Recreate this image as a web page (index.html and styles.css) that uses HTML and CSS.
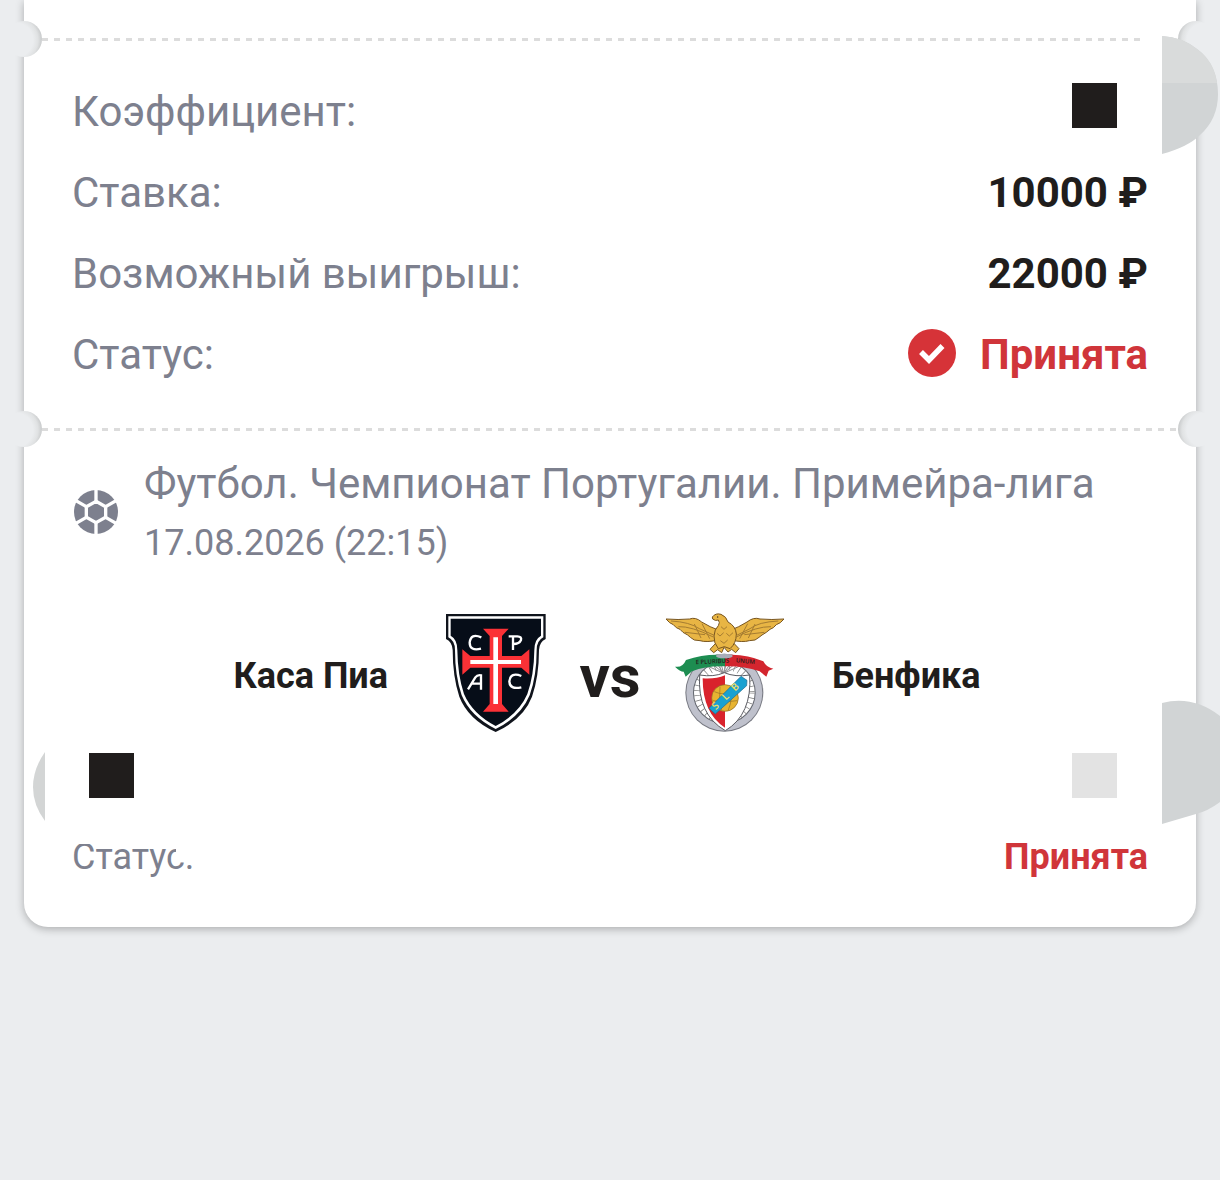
FILE: index.html
```html
<!DOCTYPE html>
<html lang="ru">
<head>
<meta charset="utf-8">
<meta name="viewport" content="width=device-width, initial-scale=1">
<title>Купон</title>
<link rel="stylesheet" href="styles.css">
</head>
<body>
<main class="ticket">
  <div class="stub"></div>

  <div class="perforation">
    <span class="notch notch-left"></span>
    <span class="dashes dashes-short"></span>
    <span class="notch notch-right"></span>
  </div>

  <dl class="details">
    <div class="row">
      <dt>Коэффициент:</dt>
      <dd class="raised"><span class="box"></span></dd>
    </div>
    <div class="row">
      <dt>Ставка:</dt>
      <dd>10000 ₽</dd>
    </div>
    <div class="row">
      <dt>Возможный выигрыш:</dt>
      <dd>22000 ₽</dd>
    </div>
    <div class="row">
      <dt>Статус:</dt>
      <dd class="accepted">
        <svg class="check" viewBox="0 0 48 48" aria-hidden="true">
          <circle cx="24" cy="24" r="24" fill="#d63338"/>
          <path d="M13 23L21 31L34.500 17" fill="none" stroke="#fff" stroke-width="5.500"/>
        </svg>
        Принята
      </dd>
    </div>
  </dl>

  <div class="perforation">
    <span class="notch notch-left"></span>
    <span class="dashes"></span>
    <span class="notch notch-right"></span>
  </div>

  <section class="event">
    <header class="event-head">
      <svg class="ball" viewBox="222 300 132 132" aria-hidden="true">
        <circle cx="288" cy="366" r="66" fill="#7d808e"/>
        <g fill="none" stroke="#fff" stroke-width="10">
          <path d="M288 334L317 350V382L288 398L259 382V350Z"/>
          <path d="M288 334V296M317 350L352 330M317 382L352 402M288 398V436M259 382L224 402M259 350L224 330"/>
        </g>
      </svg>
      <div class="event-text">
        <h1 class="league">Футбол. Чемпионат Португалии. Примейра-лига</h1>
        <time class="date" datetime="2026-08-17T22:15">17.08.2026 (22:15)</time>
      </div>
    </header>

    <div class="teams">
      <span class="team team-home">Каса Пиа</span>
      <svg class="crest" viewBox="18 39 360 360" role="img" aria-label="Каса Пиа">
        <path d="M48 42H347V117Q328 126 327 150Q327 230 306 290Q280 358 197 396Q114 358 88 290Q68 230 68 150Q67 126 48 117Z" fill="#10141c"/>
        <path d="M55 49H340V112Q320 122 320 150Q320 228 299 286Q272 350 197 387Q122 350 95 286Q75 228 75 150Q75 122 55 112Z" fill="#fff"/>
        <path d="M62 56H333V107Q313 118 313 150Q312 226 292 282Q266 342 197 378Q128 342 102 282Q83 226 82 150Q82 118 62 107Z" fill="#060d18"/>
        <path d="M159 86H236L216 108V168H274L298 148V224L274 203H216V312L236 335H159L179 312V203H121L97 224V148L121 168H179V108Z" fill="#fb3136"/>
        <path d="M190 112H204V180H273V192H204V312H190V192H121V180H190Z" fill="#fff"/>
        <g fill="none" stroke="#fff" stroke-width="7">
          <path d="M154 112Q122 98 119 128Q119 154 153 146"/>
          <path d="M249 150V112M236 109H262Q276 110 273 120Q268 132 250 132"/>
          <path d="M114 268L136 232Q142 224 153 226V269M126 251H153"/>
          <path d="M274 228Q242 215 238 244Q239 270 274 262"/>
        </g>
      </svg>
      <span class="versus">vs</span>
      <svg class="crest" viewBox="27 39 360 360" role="img" aria-label="Бенфика">
        <circle cx="208" cy="278" r="117" fill="#777982"/>
        <circle cx="208" cy="278" r="114" fill="#bfc1cc"/>
        <circle cx="208" cy="278" r="94" fill="#63666e"/>
        <circle cx="208" cy="278" r="91" fill="#fff"/>
        <circle cx="208" cy="278" r="80" fill="none" stroke="#777" stroke-width="22" stroke-dasharray="2 13"/>
        <path d="M206 220L140 190M206 220L158 180M206 220L178 180M206 220L195 180M206 220L217 180M206 220L234 180M206 220L254 180M206 220L272 190" stroke="#8d8d91" stroke-width="3"/>
        <path d="M134 225Q176 232 208 218Q240 232 284 225Q292 343 211 392Q126 343 134 225Z" fill="#fff" stroke="#5a5b62" stroke-width="3"/>
        <path d="M143 235Q181 238 210 226V383Q143 341 143 235Z" fill="#d9222c"/>
        <path d="M210 226Q240 238 276 235Q279 343 210 383Z" fill="#fff"/>
        <circle cx="210" cy="294" r="40" fill="#e7b431" stroke="#8a6726" stroke-width="2"/>
        <path d="M178 275Q210 290 242 272M174 302Q207 310 246 302M195 260Q190 294 200 330M225 260Q235 294 220 330" fill="none" stroke="#956f27" stroke-width="2"/>
        <path d="M258 229L276 241L275 257L181 342L162 325Z" fill="#19a1d1" stroke="#236a8b" stroke-width="2"/>
        <g class="crest-letters" fill="#f2df63" font-size="30">
          <text transform="translate(182 331) rotate(-44)">S</text>
          <text transform="translate(212 302) rotate(-44)">L</text>
          <text transform="translate(240 275) rotate(-44)">B</text>
        </g>
        <path d="M60 200Q83 204 93 180Q150 160 210 165V199Q154 197 111 214L92 230L86 215Q75 215 60 200Z" fill="#1d8d51"/>
        <path d="M210 165Q270 160 325 184Q335 204 355 206L341 212L334 230L314 214Q261 197 210 199Z" fill="#d3252e"/>
        <g class="crest-letters" fill="#241d1b" font-size="18">
          <text x="122" y="193" transform="rotate(-3 122 193)">E PLURIBUS</text>
          <text x="242" y="187" transform="rotate(5 242 187)">UNUM</text>
        </g>
        <ellipse cx="208" cy="168" rx="25" ry="7" fill="#a9adb8"/>
        <g fill="#e8b544" stroke="#78551f" stroke-width="3" stroke-linejoin="round">
          <path d="M190 90Q166 82 140 66Q122 50 104 57Q70 60 33 57L44 68L55 74L64 83L75 88L84 97L98 105L106 112L118 120L135 122Q155 128 190 120Z"/>
          <path d="M228 90Q250 82 276 66Q296 50 315 57Q350 60 387 57L376 68L364 74L355 83L345 88L334 97L321 105L312 112L300 120L283 122Q262 128 228 120Z"/>
          <path d="M184 128L165 148L176 158L188 149L200 158L207 142L219 156L230 148L242 158L252 146L230 123Z"/>
          <path d="M172 51Q182 38 198 43Q214 49 219 66Q242 78 244 102Q244 130 225 146L208 140L190 146Q176 130 177 108Q178 88 190 77Q196 67 190 60Q181 64 173 57Z"/>
        </g>
        <path d="M48 63Q104 66 133 86L180 107M70 80Q108 78 175 111M90 97L150 104M118 72L138 114M141 71L164 116M370 63Q310 66 285 86L243 107M348 80Q305 79 244 111M328 97L268 104M300 72L280 114M278 71L254 116M198 80L207 88L216 80M186 100L195 108L206 98M214 100L223 108L234 98M196 122L207 130L218 120" fill="none" stroke="#a57c31" stroke-width="3"/>
        <circle cx="188" cy="51" r="2" fill="#352819"/>
      </svg>
      <span class="team">Бенфика</span>
    </div>

    <div class="outcome">
      <span class="box"></span>
      <span class="box box-light"></span>
    </div>

    <div class="event-status">
      <span class="status-label">Статус:</span>
      <strong class="status-value">Принята</strong>
    </div>
  </section>

  <svg class="mark mark-top" viewBox="0 0 58 120" aria-hidden="true">
    <path d="M0 0Q20 1 35 13C50 24 56 40 56 58Q56 83 38 99Q26 111 0 118Z" fill="#d1d4d5"/>
    <path d="M0 0Q20 1 35 13Q52 25 55 47H0Z" fill="#d9dbdb"/>
  </svg>
  <svg class="mark mark-bottom" viewBox="0 0 58 124" aria-hidden="true">
    <path d="M0 3Q31 -5 58 16V102Q46 111 34 114L0 124Z" fill="#d1d4d5"/>
  </svg>
  <svg class="mark mark-left" viewBox="0 0 12 70" aria-hidden="true">
    <path d="M12 0V69Q0 53 0 35Q0 17 12 0Z" fill="#d3d5d5"/>
  </svg>
</main>
</body>
</html>
```
FILE: styles.css
```css
* {
  box-sizing: border-box;
}

body {
  margin: 0;
  background: #ebedef;
  color: #201d1c;
  font-family: Roboto, "Liberation Sans", sans-serif;
  font-size: 42px;
  line-height: 49px;
  overflow-x: hidden;
}

.ticket {
  position: relative;
  margin: 0 24px 48px;
  background: #fff;
  border-radius: 0 0 24px 24px;
  box-shadow: 0 2px 8px rgba(0, 0, 0, 0.28);
}

.stub {
  height: 21px;
}

.perforation {
  display: flex;
  align-items: center;
  margin: 0 -18px;
}

.notch {
  flex: none;
  width: 36px;
  height: 36px;
  border-radius: 50%;
}

.notch-left {
  background: radial-gradient(circle at 10px 19px, #ebedef 17px, #e0e2e3 22px, #c2c4c5 27px);
}

.notch-right {
  background: radial-gradient(circle at 26px 19px, #ebedef 17px, #e0e2e3 22px, #c2c4c5 27px);
}

.dashes {
  flex: 1;
  height: 3px;
  background: repeating-linear-gradient(90deg, #dcdcdc 0 6px, transparent 6px 12px);
}

.dashes-short {
  margin-right: 38px;
}

.details {
  display: flex;
  flex-direction: column;
  gap: 32px;
  margin: 0;
  padding: 30px 48px 32px;
}

.row {
  display: flex;
  justify-content: space-between;
}

.row dt {
  color: #7d808e;
}

.row dd {
  margin: 0;
  font-weight: 700;
}

.row .raised {
  display: flex;
  margin: -4px 31px 0 0;
}

.row .accepted {
  display: flex;
  gap: 24px;
  color: #d0353a;
}

.check {
  width: 48px;
  height: 48px;
  margin-top: -1px;
}

.box {
  width: 45px;
  height: 45px;
  background: #201d1c;
}

.box-light {
  background: #e3e3e3;
}

.event {
  padding: 12px 48px 49px;
}

.event-head {
  display: flex;
  align-items: center;
  gap: 26px;
  color: #7d808e;
}

.ball {
  flex: none;
  width: 44px;
  height: 44px;
  margin-left: 2px;
}

.event-text {
  display: flex;
  flex-direction: column;
  gap: 14px;
}

.league {
  margin: 0;
  font-size: 42px;
  font-weight: 400;
}

.date {
  font-size: 36px;
  line-height: 42px;
}

.teams {
  display: grid;
  grid-template-columns: 1fr 120px 108px 120px 1fr;
  align-items: center;
  margin-top: 49px;
}

.team {
  padding: 0 48px;
  font-size: 36px;
  font-weight: 700;
  line-height: 42px;
}

.team-home {
  text-align: right;
}

.crest {
  width: 120px;
  height: 126px;
  padding-bottom: 6px;
}

.crest-letters {
  font-family: "Open Sans", sans-serif;
  font-weight: 600;
}

.versus {
  font-size: 60px;
  font-weight: 700;
  text-align: center;
}

.outcome {
  display: flex;
  justify-content: space-between;
  margin-top: 14px;
  padding: 0 31px 0 17px;
}

.event-status {
  display: flex;
  justify-content: space-between;
  margin-top: 38px;
  font-size: 36px;
  line-height: 42px;
}

.status-label {
  position: relative;
  color: #7d808e;
}

.status-label::before,
.status-label::after {
  content: "";
  position: absolute;
  top: 0;
  right: 0;
  background: #fff;
}

.status-label::before {
  width: 100%;
  height: 8px;
}

.status-label::after {
  width: 18px;
  height: 20px;
}

.status-value {
  color: #d0353a;
}

.mark {
  position: absolute;
}

.mark-top {
  top: 36px;
  right: -24px;
  width: 58px;
  height: 120px;
}

.mark-bottom {
  top: 700px;
  right: -24px;
  width: 58px;
  height: 124px;
}

.mark-left {
  top: 752px;
  left: 9px;
  width: 12px;
  height: 70px;
}
```
